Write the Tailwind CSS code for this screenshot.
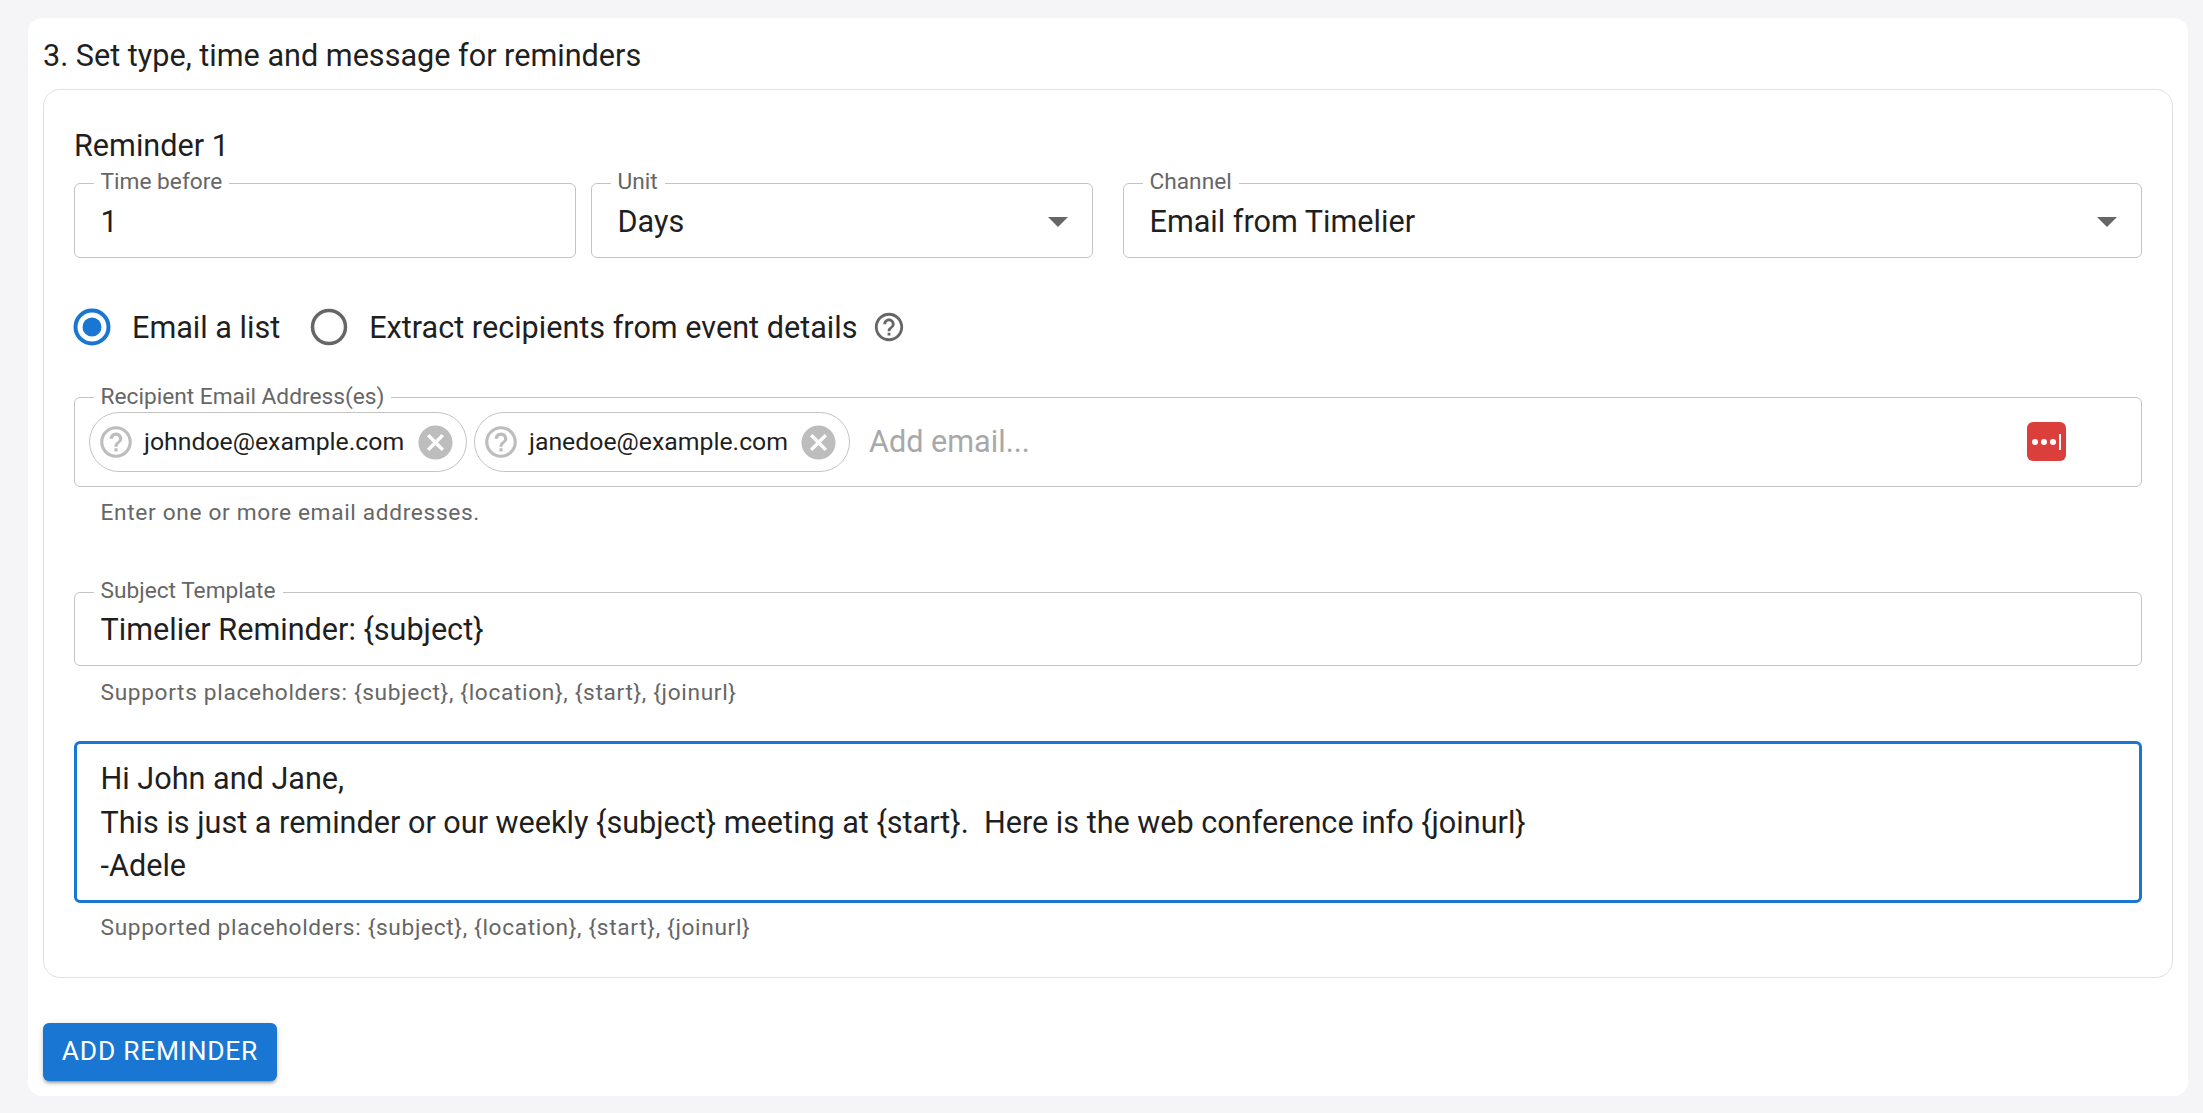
<!DOCTYPE html>
<html>
<head>
<meta charset="utf-8">
<script src="https://cdn.jsdelivr.net/npm/@tailwindcss/browser@4"></script>
</head>
<body class="bg-[#f5f5f7] font-[Roboto,sans-serif] text-[#1f1f1f]">
<div class="h-[1113px] w-[2203px] pt-[18px] pl-[28px] pr-[15px] overflow-hidden">
  <!-- Panel -->
  <div class="h-[1078px] bg-white rounded-[14px] px-[15px] pt-[20px]">
    <h2 class="h-[36px] leading-[36px] text-[30.6px] mb-[15px]">3. Set type, time and message for reminders</h2>

    <!-- Reminder card -->
    <div class="h-[889px] border-[1.5px] border-[#e0e0e0] rounded-[17px] px-[30px] pt-[38px]">
      <div class="h-[36px] leading-[36px] text-[30.6px] mb-[19px]">Reminder 1</div>

      <!-- Time, unit, channel -->
      <div class="flex h-[75px]">
        <div class="relative w-[502px] h-full border-[1.5px] border-[#c4c4c4] rounded-[6px] flex items-center pl-[25.5px] pt-[2px] text-[30.6px]">
          <span class="absolute left-[18.5px] -top-[15px] bg-white px-[7px] text-[22.7px] leading-[26px] text-[#666]">Time before</span>
          1
        </div>
        <div class="relative w-[502px] ml-[15px] h-full border-[1.5px] border-[#c4c4c4] rounded-[6px] flex items-center justify-between pl-[25.5px] pr-[10px] pt-[2px] text-[30.6px]">
          <span class="absolute left-[18.5px] -top-[15px] bg-white px-[7px] text-[22.7px] leading-[26px] text-[#666]">Unit</span>
          Days
          <svg class="w-[48px] h-[48px] -mt-[2px] fill-[#666]" viewBox="0 0 24 24"><path d="M7 10l5 5 5-5z"/></svg>
        </div>
        <div class="relative flex-1 ml-[30px] h-full border-[1.5px] border-[#c4c4c4] rounded-[6px] flex items-center justify-between pl-[25.5px] pr-[10px] pt-[2px] text-[30.6px]">
          <span class="absolute left-[18.5px] -top-[15px] bg-white px-[7px] text-[22.7px] leading-[26px] text-[#666]">Channel</span>
          Email from Timelier
          <svg class="w-[48px] h-[48px] -mt-[2px] fill-[#666]" viewBox="0 0 24 24"><path d="M7 10l5 5 5-5z"/></svg>
        </div>
      </div>

      <!-- Radio group -->
      <div class="flex items-center h-[44px] mt-[47px] text-[30.6px]">
        <svg class="w-[44px] h-[44px] -ml-[4px] fill-[#1976d2]" viewBox="0 0 44 44"><circle cx="22" cy="22" r="16.5" fill="none" stroke="#1976d2" stroke-width="4"/><circle cx="22" cy="22" r="9.5"/></svg>
        <span class="ml-[18px] pt-[2px]">Email a list</span>
        <svg class="w-[44px] h-[44px] ml-[27px] fill-none" viewBox="0 0 44 44"><circle cx="22" cy="22" r="16.5" stroke="#666" stroke-width="3.5"/></svg>
        <span class="ml-[18px] pt-[2px]">Extract recipients from event details</span>
        <svg class="w-[34px] h-[34px] ml-[15px] fill-[#666]" viewBox="0 0 24 24"><path d="M11 18h2v-2h-2v2zm1-16C6.48 2 2 6.48 2 12s4.48 10 10 10 10-4.48 10-10S17.52 2 12 2zm0 18c-4.41 0-8-3.59-8-8s3.59-8 8-8 8 3.59 8 8-3.59 8-8 8zm0-14c-2.21 0-4 1.79-4 4h2c0-1.1.9-2 2-2s2 .9 2 2c0 2-3 1.75-3 5h2c0-2.25 3-2.5 3-5 0-2.21-1.79-4-4-4z"/></svg>
      </div>

      <!-- Recipients -->
      <div class="relative h-[90px] mt-[48px] border-[1.5px] border-[#c4c4c4] rounded-[6px] flex items-center pl-[14px]">
        <span class="absolute left-[18.5px] -top-[14px] bg-white px-[7px] text-[22.7px] leading-[26px] text-[#666]">Recipient Email Address(es)</span>
        <div class="flex items-center w-[378px] h-[60px] border-[1.5px] border-[#c4c4c4] rounded-full pl-[7px] text-[24.8px]">
          <svg class="w-[38px] h-[38px] fill-[#bdbdbd]" viewBox="0 0 24 24"><path d="M11 18h2v-2h-2v2zm1-16C6.48 2 2 6.48 2 12s4.48 10 10 10 10-4.48 10-10S17.52 2 12 2zm0 18c-4.41 0-8-3.59-8-8s3.59-8 8-8 8 3.59 8 8-3.59 8-8 8zm0-14c-2.21 0-4 1.79-4 4h2c0-1.1.9-2 2-2s2 .9 2 2c0 2-3 1.75-3 5h2c0-2.25 3-2.5 3-5 0-2.21-1.79-4-4-4z"/></svg>
          <span class="ml-[9px]">johndoe@example.com</span>
          <svg class="w-[41px] h-[41px] ml-auto mr-[10px] fill-[#bdbdbd]" viewBox="0 0 24 24"><path d="M12 2C6.47 2 2 6.47 2 12s4.47 10 10 10 10-4.47 10-10S17.53 2 12 2zm5 13.59L15.59 17 12 13.41 8.41 17 7 15.59 10.59 12 7 8.41 8.41 7 12 10.59 15.59 7 17 8.41 13.41 12 17 15.59z"/></svg>
        </div>
        <div class="flex items-center w-[376px] h-[60px] ml-[7px] border-[1.5px] border-[#c4c4c4] rounded-full pl-[7px] text-[24.8px]">
          <svg class="w-[38px] h-[38px] fill-[#bdbdbd]" viewBox="0 0 24 24"><path d="M11 18h2v-2h-2v2zm1-16C6.48 2 2 6.48 2 12s4.48 10 10 10 10-4.48 10-10S17.52 2 12 2zm0 18c-4.41 0-8-3.59-8-8s3.59-8 8-8 8 3.59 8 8-3.59 8-8 8zm0-14c-2.21 0-4 1.79-4 4h2c0-1.1.9-2 2-2s2 .9 2 2c0 2-3 1.75-3 5h2c0-2.25 3-2.5 3-5 0-2.21-1.79-4-4-4z"/></svg>
          <span class="ml-[9px]">janedoe@example.com</span>
          <svg class="w-[41px] h-[41px] ml-auto mr-[10px] fill-[#bdbdbd]" viewBox="0 0 24 24"><path d="M12 2C6.47 2 2 6.47 2 12s4.47 10 10 10 10-4.47 10-10S17.53 2 12 2zm5 13.59L15.59 17 12 13.41 8.41 17 7 15.59 10.59 12 7 8.41 8.41 7 12 10.59 15.59 7 17 8.41 13.41 12 17 15.59z"/></svg>
        </div>
        <span class="ml-[19px] text-[30.6px] text-[#a8a8a8]">Add email...</span>
        <!-- password manager badge -->
        <div class="absolute right-[75px] top-[24px] w-[39px] h-[39px] bg-[#db3f3b] rounded-[6px] flex items-center justify-center gap-[3px]">
          <span class="w-[6px] h-[6px] rounded-full bg-white"></span>
          <span class="w-[6px] h-[6px] rounded-full bg-white"></span>
          <span class="w-[6px] h-[6px] rounded-full bg-white"></span>
          <span class="w-[2px] h-[16px] bg-white"></span>
        </div>
      </div>
      <p class="ml-[26.5px] mt-[13px] h-[26px] leading-[26px] text-[22.7px] tracking-[0.66px] text-[#666]">Enter one or more email addresses.</p>

      <!-- Subject -->
      <div class="relative h-[74px] mt-[66px] border-[1.5px] border-[#c4c4c4] rounded-[6px] flex items-center pl-[25.5px] pt-[1px] text-[30.6px]">
        <span class="absolute left-[18.5px] -top-[15px] bg-white px-[7px] text-[22.7px] leading-[26px] text-[#666]">Subject Template</span>
        Timelier Reminder: {subject}
      </div>
      <p class="ml-[26.5px] mt-[14px] h-[26px] leading-[26px] text-[22.7px] tracking-[0.66px] text-[#666]">Supports placeholders: {subject}, {location}, {start}, {joinurl}</p>

      <!-- Message -->
      <div class="h-[162px] mt-[35px] border-[3px] border-[#1976d2] rounded-[6px] pl-[23.5px] pt-[13px] text-[30.6px] leading-[43.5px] whitespace-pre-wrap">Hi John and Jane,
This is just a reminder or our weekly {subject} meeting at {start}.  Here is the web conference info {joinurl}
-Adele</div>
      <p class="ml-[26.5px] mt-[12px] h-[26px] leading-[26px] text-[22.7px] tracking-[0.66px] text-[#666]">Supported placeholders: {subject}, {location}, {start}, {joinurl}</p>
    </div>

    <button class="mt-[45px] w-[234px] h-[58px] bg-[#1976d2] text-white rounded-[6px] text-[26.4px] tracking-[0.75px] shadow-[0_4px_2px_-3px_rgba(0,0,0,0.25),0_3px_3px_0_rgba(0,0,0,0.16),0_1px_7px_0_rgba(0,0,0,0.12)]">ADD REMINDER</button>
  </div>
</div>
</body>
</html>
